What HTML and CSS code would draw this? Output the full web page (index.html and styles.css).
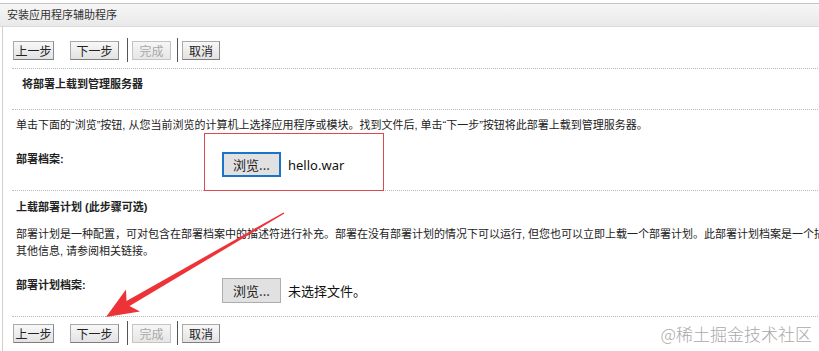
FILE: index.html
```html
<!DOCTYPE html>
<html lang="zh-CN">
<head>
  <meta charset="UTF-8" />
  <title>安装应用程序辅助程序</title>
  <link rel="stylesheet" href="styles.css">
</head>
<body>
  <div class="wizard">
    <div class="title-bar">安装应用程序辅助程序</div>

    <div class="panel">
      <div class="btn-row">
        <button class="btn prev">上一步</button>
        <button class="btn next">下一步</button>
        <span class="sep"></span>
        <button class="btn finish" disabled>完成</button>
        <span class="sep"></span>
        <button class="btn cancel">取消</button>
      </div>

      <div class="section step-title">将部署上载到管理服务器</div>

      <div class="section">
        <p class="desc">单击下面的“浏览”按钮, 从您当前浏览的计算机上选择应用程序或模块。找到文件后, 单击“下一步”按钮将此部署上载到管理服务器。</p>
        <div class="field">
          <label class="field-label">部署档案:</label>
          <div class="file-input">
            <button class="browse focused">浏览...</button>
            <span class="file-name">hello.war</span>
          </div>
        </div>
      </div>

      <div class="section">
        <div class="sub-title">上载部署计划 (此步骤可选)</div>
        <p class="desc plan-desc">部署计划是一种配置，可对包含在部署档案中的描述符进行补充。部署在没有部署计划的情况下可以运行, 但您也可以立即上载一个部署计划。此部署计划档案是一个描述符文件或包含描述符的目录。有关<br>其他信息, 请参阅相关链接。</p>
        <div class="field">
          <label class="field-label">部署计划档案:</label>
          <div class="file-input">
            <button class="browse">浏览...</button>
            <span class="file-name">未选择文件。</span>
          </div>
        </div>
      </div>

      <div class="btn-row bottom">
        <button class="btn prev">上一步</button>
        <button class="btn next">下一步</button>
        <span class="sep"></span>
        <button class="btn finish" disabled>完成</button>
        <span class="sep"></span>
        <button class="btn cancel">取消</button>
      </div>
    </div>
  </div>

  <!-- annotations drawn over the screenshot -->
  <div class="mark-box"></div>
  <svg class="mark-arrow" width="819" height="351" viewBox="0 0 819 351">
    <polygon points="106,317 140,311.5 129.5,306 284.4,213.6 283.6,212.4 126.5,301 126,289.5" fill="#ee3338" />
  </svg>
  <div class="watermark">@稀土掘金技术社区</div>
</body>
</html>
```

FILE: styles.css
```css
body {
  margin: 0;
  background: #fff;
  color: #222;
  font-family: "Liberation Sans", "Noto Sans CJK SC", sans-serif;
  font-size: 11px;
  overflow: hidden;
  width: 819px;
  height: 351px;
  position: relative;
}

.wizard {
  width: 1100px;
  padding-top: 3px;
}

.title-bar {
  height: 22px;
  line-height: 22px;
  padding-left: 7px;
  border-top: 1px solid #c4c4c4;
  border-bottom: 1px solid #dadada;
  background: linear-gradient(#f7f7f7, #eeeeee 60%, #e9e9e9);
  color: #333;
}

.panel {
  margin-left: 2px;
  border-left: 1px solid #cfcfcf;
  padding-left: 9px;
  min-height: 330px;
}

.btn-row {
  display: flex;
  align-items: center;
  padding: 11px 0 6px 1px;
  border-bottom: 1px dotted #b8b8b8;
}

.btn-row.bottom {
  border-bottom: none;
  padding-top: 4px;
}

.btn {
  height: 19px;
  padding: 0;
  font: inherit;
  font-size: 12px;
  color: #222;
  background: linear-gradient(#f8f8f8, #e2e2e2);
  border: 1px solid #a9a9a9;
  border-right-color: #8a8a8a;
  border-bottom-color: #7e7e7e;
  border-radius: 0;
}

.btn.prev {
  width: 41px;
  margin-right: 16px;
}

.btn.next {
  width: 49px;
  margin-right: 8px;
}

.btn.finish {
  width: 39px;
  margin-right: 6px;
  color: #a8a8a8;
  border-color: #c4c4c4;
  background: linear-gradient(#f6f6f6, #e6e6e6);
}

.btn.cancel {
  width: 38px;
}

.sep {
  width: 1px;
  height: 24px;
  background: #555;
  margin-right: 4px;
}

.section {
  border-bottom: 1px dotted #b8b8b8;
  padding: 7px 0 13px 4px;
}

.step-title {
  height: 16px;
  padding: 7px 0 17px 10px;
  line-height: 16px;
  font-weight: bold;
}

.sub-title {
  font-weight: bold;
  line-height: 16px;
  margin-top: 1px;
}

.desc {
  margin: 0;
  line-height: 16px;
  white-space: nowrap;
}

.plan-desc {
  margin-top: 11px;
  line-height: 17px;
}

.field {
  display: flex;
  align-items: flex-start;
  margin-top: 18px;
}

.plan-desc + .field {
  margin-top: 17px;
}

.field-label {
  width: 206px;
  line-height: 16px;
  font-weight: bold;
}

.file-input {
  display: flex;
  align-items: center;
  gap: 7px;
  margin-top: 1px;
}

.browse {
  width: 59px;
  height: 25px;
  padding: 0;
  font-family: "Noto Sans CJK SC", sans-serif;
  font-size: 13px;
  color: #222;
  background: #e1e1e1;
  border: 1px solid #adadad;
  border-radius: 0;
}

.browse.focused {
  border: 2px solid #1a74c7;
}

.file-name {
  font-family: "Noto Sans", "Noto Sans CJK SC", sans-serif;
  font-size: 13px;
  color: #111;
}

.mark-box {
  position: absolute;
  left: 204px;
  top: 133px;
  width: 178px;
  height: 56px;
  border: 1px solid #dc4a4f;
}

.mark-arrow {
  position: absolute;
  left: 0;
  top: 0;
}

.watermark {
  position: absolute;
  right: 7px;
  top: 321px;
  font-family: "Noto Sans CJK SC", sans-serif;
  font-size: 17px;
  font-weight: 300;
  color: #a9a9a9;
}
```
